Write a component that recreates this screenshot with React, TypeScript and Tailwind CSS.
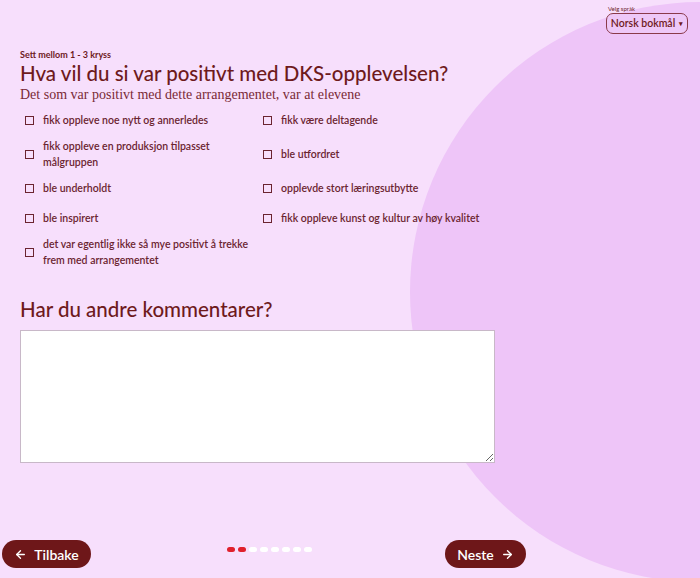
import React, { useState } from 'react';

const sans = "font-['Lato','Open_Sans',sans-serif]";
const serif = "font-['Liberation_Serif','DejaVu_Serif',serif]";

// left and right column, row by row
const options: [string, string | null][] = [
  ['fikk oppleve noe nytt og annerledes', 'fikk være deltagende'],
  ['fikk oppleve en produksjon tilpasset målgruppen', 'ble utfordret'],
  ['ble underholdt', 'opplevde stort læringsutbytte'],
  ['ble inspirert', 'fikk oppleve kunst og kultur av høy kvalitet'],
  ['det var egentlig ikke så mye positivt å trekke frem med arrangementet', null],
];

function Option({ label }: { label: string }) {
  const [checked, setChecked] = useState(false);
  return (
    <label className="flex min-h-[30px] cursor-pointer items-center gap-[9px] py-[3px] pl-[5px]">
      <input
        type="checkbox"
        checked={checked}
        onChange={() => setChecked(!checked)}
        className="h-[9px] w-[9px] shrink-0 appearance-none border border-[#6b2430] bg-transparent checked:bg-[#6b2430]"
      />
      <span className="max-w-[206px] text-[10.5px] leading-[16px] font-semibold text-[#6b2430]">{label}</span>
    </label>
  );
}

function Arrow({ dir }: { dir: 'left' | 'right' }) {
  return (
    <svg width="13" height="13" viewBox="0 0 24 24" fill="none" stroke="currentColor" strokeWidth="2.5" strokeLinecap="round" strokeLinejoin="round">
      {dir === 'left' ? (
        <>
          <path d="M19 12H5" />
          <path d="M12 19l-7-7 7-7" />
        </>
      ) : (
        <>
          <path d="M5 12h14" />
          <path d="M12 5l7 7-7 7" />
        </>
      )}
    </svg>
  );
}

export default function App() {
  const steps = 8;
  const current = 2;

  return (
    <div className={`relative flex h-[578px] w-[700px] flex-col overflow-hidden bg-[#f7dffc] text-[#6e1a1c] ${sans}`}>
      <div className="absolute left-[410px] top-[2px] h-[580px] w-[580px] rounded-full bg-[#eec5f8]" />

      <div className="relative flex justify-end pr-[12px] pt-[5px]">
        <div className="flex flex-col">
          <span className="pl-[2px] text-[6px] leading-[8px] text-[#6e1a1c]">Velg språk</span>
          <button className="flex h-[21px] w-[82px] items-center justify-center gap-[4px] rounded-[7px] border border-[#8a3a4a] bg-[#eec8f8] text-[10.5px] font-semibold">
            Norsk bokmål
            <span className="text-[7px]">▾</span>
          </button>
        </div>
      </div>

      <div className="relative flex-1 px-[20px] pt-[15px]">
        <p className="text-[9px] leading-[12px] font-bold text-[#6e1a1c]">Sett mellom 1 - 3 kryss</p>
        <h1 className="text-[20.5px] leading-[25px] font-medium">Hva vil du si var positivt med DKS-opplevelsen?</h1>
        <p className={`text-[14px] leading-[18px] text-[#7a2a36] ${serif}`}>Det som var positivt med dette arrangementet, var at elevene</p>

        <div className="mt-[1px] grid w-[476px] grid-cols-2">
          {options.map(([left, right]) => (
            <React.Fragment key={left}>
              <Option label={left} />
              {right ? <Option label={right} /> : <div />}
            </React.Fragment>
          ))}
        </div>

        <h2 className="mt-[25px] text-[20.5px] leading-[27px] font-medium">Har du andre kommentarer?</h2>
        <textarea className="mt-[7px] h-[133px] w-[475px] resize border border-[#c8b8c8] bg-white p-2 text-[12px] outline-none" />
      </div>

      <div className="relative flex h-[38px] items-start px-[2px]">
        <button className="flex h-[28px] w-[89px] items-center justify-center gap-[7px] rounded-full bg-[#6e1719] text-[14px] font-semibold text-white">
          <Arrow dir="left" />
          Tilbake
        </button>
        <div className="ml-[136px] mt-[7px] flex gap-[3px]">
          {Array.from({ length: steps }).map((_, i) => (
            <span key={i} className={`h-[5px] w-[8px] rounded-full ${i < current ? 'bg-[#e0202c]' : 'bg-white'}`} />
          ))}
        </div>
        <button className="ml-[133px] flex h-[28px] w-[81px] items-center justify-center gap-[7px] rounded-full bg-[#6e1719] text-[14px] font-semibold text-white">
          Neste
          <Arrow dir="right" />
        </button>
      </div>
    </div>
  );
}
